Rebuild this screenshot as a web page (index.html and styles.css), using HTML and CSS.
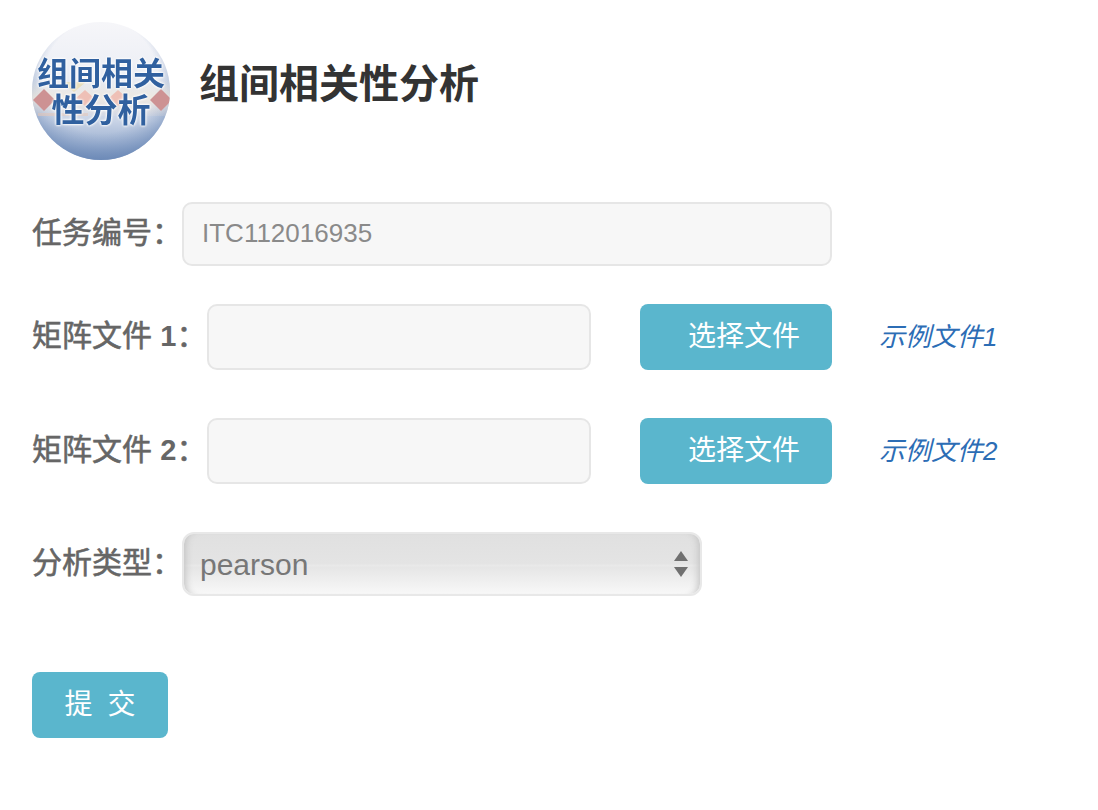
FILE: index.html
```html
<!DOCTYPE html>
<html lang="zh">
<head>
<meta charset="utf-8">
<title>组间相关性分析</title>
<link rel="stylesheet" href="styles.css">
</head>
<body>
<header class="head">
  <div class="logo">
    <svg class="logo-art" width="138" height="138" viewBox="0 0 138 138">
      <defs>
        <linearGradient id="globe" x1="0" y1="0" x2="0" y2="1">
          <stop offset="0" stop-color="#f6f6f9"/>
          <stop offset="0.3" stop-color="#eef0f6"/>
          <stop offset="0.55" stop-color="#dde4ef"/>
          <stop offset="0.72" stop-color="#c8d3e6"/>
          <stop offset="0.88" stop-color="#9db1d1"/>
          <stop offset="1" stop-color="#7490bb"/>
        </linearGradient>
        <linearGradient id="band" x1="0" y1="0" x2="0" y2="1">
          <stop offset="0" stop-color="#f6ecdc" stop-opacity="0"/>
          <stop offset="0.5" stop-color="#f6ecdc" stop-opacity="0.7"/>
          <stop offset="1" stop-color="#f1e2d8" stop-opacity="0.15"/>
        </linearGradient>
        <radialGradient id="shade" cx="0.5" cy="0.4" r="0.6">
          <stop offset="0.68" stop-color="#7d97c0" stop-opacity="0"/>
          <stop offset="1" stop-color="#6a88b6" stop-opacity="0.7"/>
        </radialGradient>
        <clipPath id="disc"><circle cx="69" cy="69" r="69"/></clipPath>
      </defs>
      <g clip-path="url(#disc)">
        <rect width="138" height="138" fill="url(#globe)"/>
        <rect width="138" height="138" fill="url(#shade)"/>
        <rect y="58" width="138" height="36" fill="url(#band)"/>
        <rect x="6" y="91" width="50" height="3" fill="#e6c3b4" opacity="0.5"/>
        <polygon points="12,67 23,78 12,89 1,78" fill="#cd9293"/>
        <polygon points="129,67 140,78 129,89 118,78" fill="#cd9293"/>
        <polygon points="53,68 62,76 53,84 44,76" fill="#eec0b6"/>
        <polygon points="86,68 95,76 86,84 77,76" fill="#eec0b6"/>
        <polygon points="30,60 54,60 42,70" fill="#e8d9a4" opacity="0.7"/>
      </g>
    </svg>
    <div class="logo-text"><span>组间相关</span><span>性分析</span></div>
  </div>
  <h1 class="title">组间相关性分析</h1>
</header>

<form class="form">
  <div class="row row-task">
    <label class="label">任务编号：</label>
    <input class="field field-task" type="text" value="ITC112016935" disabled>
  </div>
  <div class="row row-file">
    <label class="label">矩阵文件 <b class="num">1</b>：</label>
    <input class="field field-file" type="text">
    <button class="btn btn-pick" type="button">选择文件</button>
    <a class="sample" href="#">示例文件1</a>
  </div>
  <div class="row row-file">
    <label class="label">矩阵文件 <b class="num">2</b>：</label>
    <input class="field field-file" type="text">
    <button class="btn btn-pick" type="button">选择文件</button>
    <a class="sample" href="#">示例文件2</a>
  </div>
  <div class="row row-type">
    <label class="label">分析类型：</label>
    <div class="select-wrap">
      <select class="select"><option>pearson</option></select>
      <svg class="select-arrows" width="14" height="26" viewBox="0 0 14 26">
        <polygon points="7,0 14,10 0,10" fill="#707070"/>
        <polygon points="0,16 14,16 7,26" fill="#707070"/>
      </svg>
    </div>
  </div>
  <button class="btn btn-submit" type="submit">提 交</button>
</form>
</body>
</html>
```

FILE: styles.css
```css
* { box-sizing: border-box; }

html, body { background: #fff; }

body {
  margin: 0;
  padding: 22px 0 0 32px;
  font-family: "Liberation Sans", "Noto Sans CJK SC", sans-serif;
  color: #333;
}

.head {
  display: flex;
  align-items: center;
  gap: 29px;
  height: 138px;
}

.logo {
  position: relative;
  width: 138px;
  height: 138px;
  flex: none;
  filter: blur(0.6px);
}

.logo-art { display: block; }

.logo-text {
  position: absolute;
  inset: 0;
  display: flex;
  flex-direction: column;
  align-items: center;
  padding-top: 31px;
  font-family: "Noto Sans CJK SC", sans-serif;
  font-weight: 700;
  color: #30609f;
  text-shadow: 0 0 3px #fff, 0 0 3px #fff, 0 0 2px #fff;
}

.logo-text span { display: block; line-height: 37px; }
.logo-text span:first-child { font-size: 32px; }
.logo-text span:last-child { font-size: 33px; }

.title {
  margin: 0 0 14px;
  font-size: 40px;
  line-height: 48px;
  font-weight: 700;
  color: #333;
}

.form {
  display: flex;
  flex-direction: column;
  align-items: flex-start;
  margin-top: 42px;
}

.row {
  display: flex;
  align-items: center;
}

.row-task { height: 64px; margin-bottom: 38px; }
.row-file { height: 66px; margin-bottom: 48px; }
.row-type { height: 64px; margin-bottom: 76px; }

.label {
  flex: none;
  padding-bottom: 2px;
  font-size: 30px;
  line-height: 40px;
  font-weight: 400;
  -webkit-text-stroke: 0.6px #666;
  color: #666;
  white-space: nowrap;
}

.num { font-size: 29px; font-weight: 700; -webkit-text-stroke: 0; }

.row-task .label, .row-type .label { width: 150px; }
.row-file .label { width: 175px; }

.field {
  display: block;
  height: 100%;
  padding: 0 18px 2px;
  border: 2px solid #e6e6e6;
  border-radius: 10px;
  background: #f7f7f7;
  font: inherit;
  font-size: 26px;
  color: #8a8a8a;
  -webkit-text-fill-color: #8a8a8a;
  opacity: 1;
  outline: none;
}

.field-task { width: 650px; }
.field-file { width: 384px; }

.btn {
  display: block;
  height: 66px;
  border: 0;
  border-radius: 8px;
  padding: 0 0 6px;
  background: #5ab6cd;
  color: #fff;
  font-family: inherit;
  font-size: 28px;
  font-weight: 400;
}

.btn-pick {
  width: 192px;
  margin-left: 49px;
  padding-left: 48px;
  text-align: left;
}

.sample {
  margin-left: 47px;
  padding-bottom: 6px;
  font-size: 26px;
  font-style: italic;
  color: #2c6db5;
  text-decoration: none;
}

.btn-submit {
  width: 136px;
  word-spacing: 7px;
}

.select-wrap {
  position: relative;
  width: 520px;
  height: 100%;
}

.select {
  display: block;
  width: 100%;
  height: 100%;
  padding: 0 16px;
  appearance: none;
  -webkit-appearance: none;
  border: 2px solid #e8e8e8;
  border-radius: 12px;
  background: linear-gradient(to bottom, #e0e0e0 0%, #e4e4e4 50%, #e9e9e9 52%, #e6e6e6 56%, #f8f8f8 100%);
  box-shadow: inset 8px 0 7px -6px #c4c4c4, inset -8px 0 7px -6px #c4c4c4;
  font-family: inherit;
  font-size: 30px;
  color: #777;
  outline: none;
}

.select-arrows {
  position: absolute;
  top: 19px;
  right: 14px;
}
```
